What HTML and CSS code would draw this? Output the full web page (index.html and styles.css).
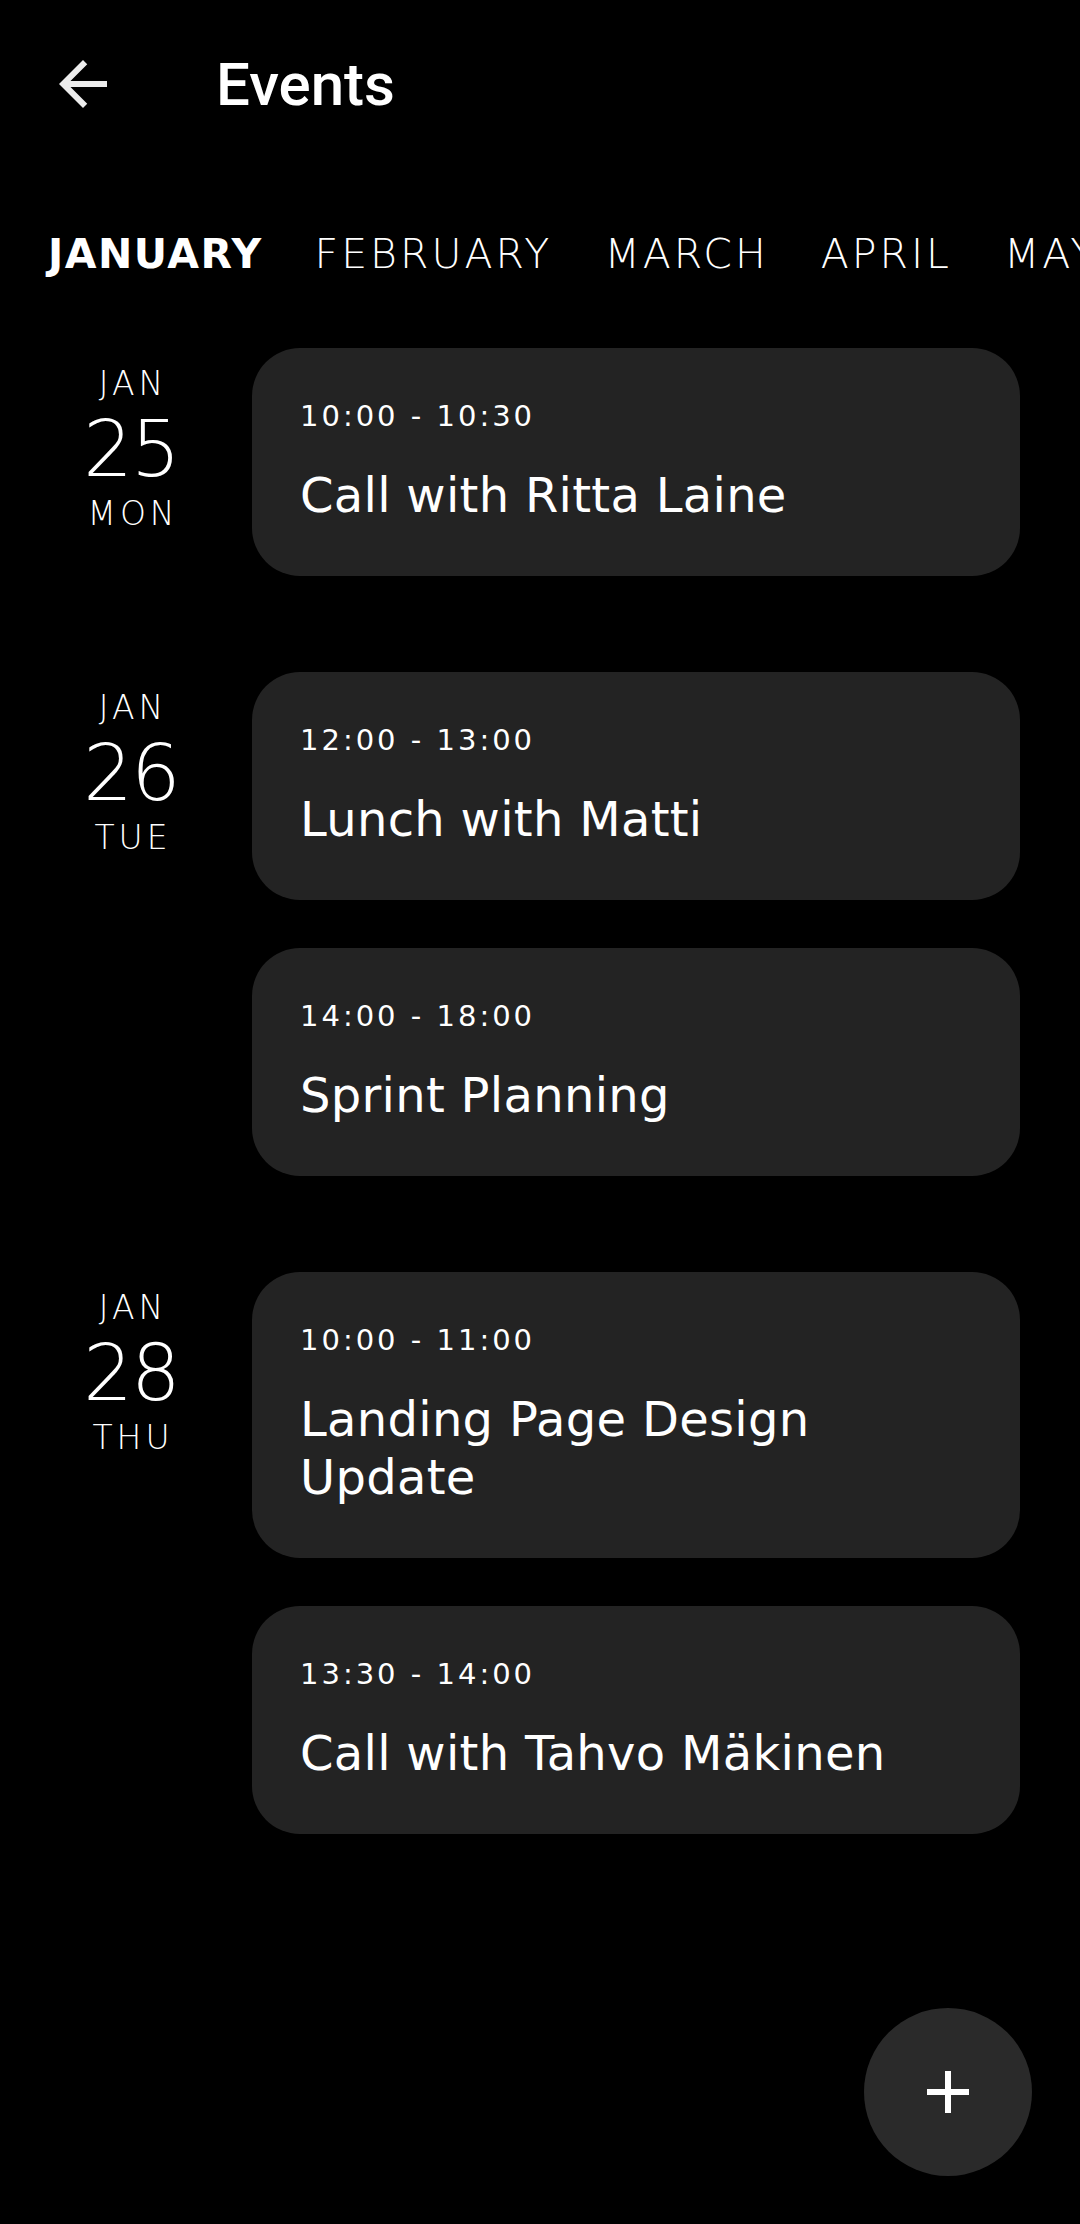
FILE: index.html
```html
<!DOCTYPE html>
<html lang="en">
<head>
<meta charset="utf-8">
<title>Events</title>
<link rel="stylesheet" href="styles.css">
</head>
<body>
<div class="screen">
  <header class="topbar">
    <svg class="back" viewBox="0 0 24 24" width="72" height="72" aria-hidden="true">
      <path d="M20 11H7.83l5.59-5.59L12 4l-8 8 8 8 1.41-1.41L7.83 13H20v-2z" fill="#ececec"/>
    </svg>
    <h1 class="title">Events</h1>
  </header>

  <nav class="months">
    <span class="month active">JANUARY</span>
    <span class="month">FEBRUARY</span>
    <span class="month">MARCH</span>
    <span class="month">APRIL</span>
    <span class="month">MAY</span>
  </nav>

  <main class="days">
    <section class="day">
      <div class="date">
        <span class="mon">JAN</span>
        <span class="num">25</span>
        <span class="wd">MON</span>
      </div>
      <div class="cards">
        <article class="card">
          <div class="time">10:00 - 10:30</div>
          <div class="name">Call with Ritta Laine</div>
        </article>
      </div>
    </section>

    <section class="day">
      <div class="date">
        <span class="mon">JAN</span>
        <span class="num">26</span>
        <span class="wd">TUE</span>
      </div>
      <div class="cards">
        <article class="card">
          <div class="time">12:00 - 13:00</div>
          <div class="name">Lunch with Matti</div>
        </article>
        <article class="card">
          <div class="time">14:00 - 18:00</div>
          <div class="name">Sprint Planning</div>
        </article>
      </div>
    </section>

    <section class="day">
      <div class="date">
        <span class="mon">JAN</span>
        <span class="num">28</span>
        <span class="wd">THU</span>
      </div>
      <div class="cards">
        <article class="card">
          <div class="time">10:00 - 11:00</div>
          <div class="name">Landing Page Design<br>Update</div>
        </article>
        <article class="card">
          <div class="time">13:30 - 14:00</div>
          <div class="name">Call with Tahvo Mäkinen</div>
        </article>
      </div>
    </section>
  </main>

  <button class="fab" aria-label="Add event">
    <svg viewBox="0 0 42 42" width="42" height="42" aria-hidden="true">
      <rect x="18" y="0" width="6" height="42" fill="#fff"/>
      <rect x="0" y="18" width="42" height="6" fill="#fff"/>
    </svg>
  </button>
</div>
</body>
</html>
```

FILE: styles.css
```css
* { box-sizing: border-box; }

html, body {
  margin: 0;
  padding: 0;
  background: #000;
}

.screen {
  position: relative;
  width: 1080px;
  height: 2224px;
  overflow: hidden;
  background: #000;
  color: #fff;
  font-family: "DejaVu Sans", "Open Sans", sans-serif;
}

.topbar {
  height: 168px;
  display: flex;
  align-items: center;
  padding-left: 47px;
}

.back {
  display: block;
  flex: none;
}

.title {
  margin: 2px 0 0 97px;
  font-family: Roboto, "Liberation Sans", sans-serif;
  font-weight: 500;
  font-size: 60px;
  line-height: 1;
  color: #fff;
}

.months {
  display: flex;
  gap: 52px;
  margin-top: 56px;
  padding-left: 48px;
  white-space: nowrap;
  font-size: 41px;
  line-height: 60px;
  font-weight: 200;
  letter-spacing: 3px;
}

.month.active {
  font-weight: 700;
  letter-spacing: 1.5px;
}

.days {
  margin-top: 64px;
  display: flex;
  flex-direction: column;
  gap: 96px;
}

.day {
  display: grid;
  grid-template-columns: 166px 768px;
  column-gap: 38px;
  padding-left: 48px;
}

.date {
  display: flex;
  flex-direction: column;
  align-items: center;
  padding-top: 18px;
}

.mon, .wd {
  font-size: 33px;
  line-height: 36px;
  font-weight: 200;
  letter-spacing: 4px;
  padding-left: 4px;
}

.num {
  font-size: 78px;
  font-weight: 200;
  line-height: 94px;
  letter-spacing: -2px;
}

.cards {
  display: flex;
  flex-direction: column;
  gap: 48px;
}

.card {
  background: #232323;
  border-radius: 48px;
  padding: 48px 48px 52px;
}

.time {
  font-size: 29px;
  line-height: 40px;
  letter-spacing: 3px;
  font-weight: 400;
}

.name {
  margin-top: 30px;
  font-size: 48px;
  line-height: 58px;
  font-weight: 400;
  letter-spacing: 0.3px;
}

.fab {
  position: absolute;
  right: 48px;
  bottom: 48px;
  width: 168px;
  height: 168px;
  border: 0;
  border-radius: 50%;
  background: #2a2a2a;
  display: flex;
  align-items: center;
  justify-content: center;
  padding: 0;
}

.fab svg { display: block; }
```
